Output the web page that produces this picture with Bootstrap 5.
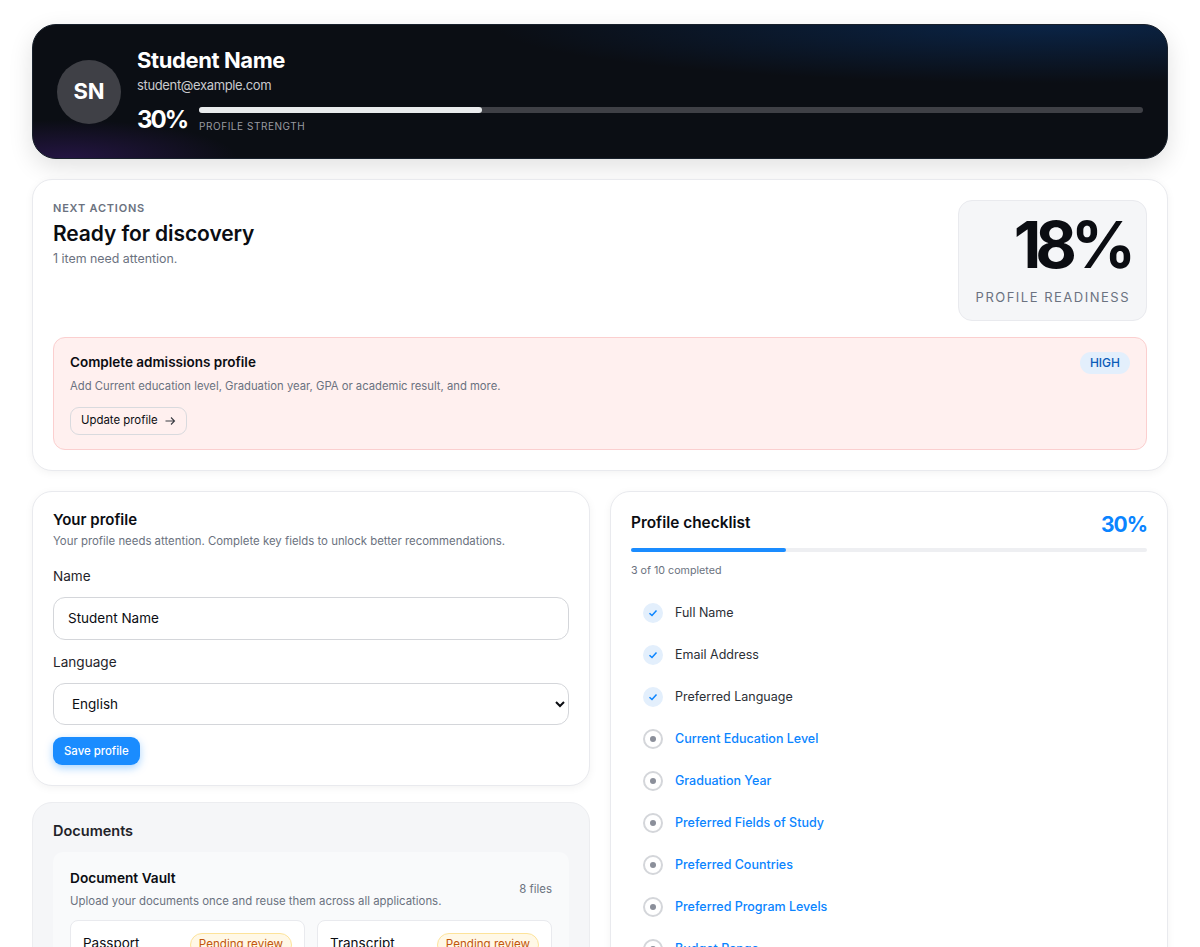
<!DOCTYPE html>
<html lang="en">
<head>
    <meta charset="UTF-8">
    <meta name="viewport" content="width=device-width, initial-scale=1.0">
    <title>Student profile</title>
    <link href="https://cdn.jsdelivr.net/npm/bootstrap@5.3.2/dist/css/bootstrap.min.css" rel="stylesheet">
    <style>
        body { background: #fff; font-family: Inter, "Liberation Sans", sans-serif; color: #0b0d12; height: 947px; overflow: hidden; }
        .page-wrap { padding: 24px 32px; }
        .hero-box { height: 135px; padding: 0 24px; border: 1px solid #18202b; border-radius: 24px; color: #fff; gap: 16px; margin-bottom: 20px;
            background: radial-gradient(ellipse 560px 58px at 90% 0, rgba(10,60,125,.48), transparent), radial-gradient(ellipse 170px 38px at 3% 100%, rgba(70,30,130,.42), transparent), #0b0e14;
            box-shadow: 0 8px 24px rgba(0,0,0,.12); }
        .hero-avatar { width: 64px; height: 64px; border-radius: 50%; background: #3f4046; font-size: 22px; font-weight: 700; }
        .hero-text { margin-bottom: 1px; }
        .hero-name { font-size: 22px; font-weight: 700; letter-spacing: -.4px; line-height: 28px; }
        .hero-mail { font-size: 13px; letter-spacing: -.35px; color: #c9cacd; line-height: 20px; margin-top: 1px; }
        .hero-strength { margin-top: 9px; gap: 12px; }
        .hero-pct { font-size: 24px; font-weight: 700; letter-spacing: -2px; line-height: 32px; }
        .hero-bar { margin-top: 3px; }
        .hero-track { height: 6px; border-radius: 3px; background: #3f4046; }
        .hero-fill { height: 6px; border-radius: 3px; background: #e9ebed; }
        .hero-label { font-size: 10px; letter-spacing: .55px; color: #9a9ba0; line-height: 14px; margin-top: 6px; }
        .panel-box { background: #fff; border: 1px solid #e9eaee; border-radius: 20px; padding: 20px; box-shadow: 0 2px 8px rgba(0,0,0,.05); }
        .eyebrow-text { font-size: 11px; font-weight: 600; letter-spacing: .8px; color: #6b7280; line-height: 16px; }
        .ready-title { font-size: 21px; font-weight: 600; letter-spacing: -.1px; line-height: 34px; margin-top: 1px; }
        .ready-note { font-size: 12.4px; color: #6b7280; line-height: 16px; }
        .muted-text { font-size: 11.4px; color: #6b7280; }
        .score-box { width: 189px; height: 121px; padding: 0 16px; background: #f5f6f8; border: 1px solid #e9eaee; border-radius: 14px; text-align: right; }
        .score-num { font-size: 64px; font-weight: 700; letter-spacing: -6px; line-height: 76px; margin-top: 6px; }
        .score-label { font-size: 13px; letter-spacing: 1.5px; color: #6b7280; line-height: 18px; margin-top: 5px; white-space: nowrap; }
        .alert-box { background: #fff0ef; border: 1px solid #fbcfcf; border-radius: 12px; padding: 13px 16px; margin-top: 16px; height: 113px; }
        .alert-title { font-size: 13.5px; font-weight: 600; line-height: 22px; }
        .alert-desc { font-size: 11.27px; margin-top: 4px; }
        .high-tag { background: #e3effc; color: #0a5bb8; font-size: 12px; font-weight: 500; border-radius: 12px; padding: 3px 10px; line-height: 16px; margin-top: 1px; }
        .update-btn { font-size: 11.4px; gap: 6px; border: 1px solid #d9dade; border-radius: 9px; padding: 0 10px; height: 28px; background: transparent; color: #0b0d12; margin-top: 12px; }
        .two-col { display: grid; grid-template-columns: 558px 558px; gap: 20px; margin-top: 20px; }
        .profile-title { font-size: 15px; font-weight: 600; line-height: 16px; margin-bottom: 5px; }
        .profile-sub { margin-bottom: 16px; }
        .field-label { font-size: 13.6px; color: #1f2329; margin-bottom: 11px; line-height: 20px; }
        .field-input.form-control, .field-input.form-select { height: 43px; border-radius: 12px; font-size: 13.5px; color: #0b0d12; border-color: #d4d6da; padding: 4px 14px 6px; margin-bottom: 12px; }
        .field-input.form-select { height: 42px; padding: 6px 8px 6px 14px; appearance: auto; -webkit-appearance: auto; background-image: none; }
        .save-btn { font-size: 11.4px; font-weight: 500; color: #fff; background: #1a8cff; border: 0; border-radius: 9px; height: 28px; padding: 0 11px; box-shadow: 0 3px 8px rgba(10,132,255,.35); display: block; }
        .docs-box { background: #f5f6f8; border: 1px solid #ecedf0; border-radius: 20px; padding: 20px; margin-top: 16px; }
        .docs-title { font-size: 14.5px; font-weight: 600; color: #1f2329; line-height: 16px; }
        .vault-box { background: #f9fafb; border-radius: 10px; padding: 17px; margin-top: 13px; }
        .vault-title { font-size: 13.7px; font-weight: 600; line-height: 18px; margin-bottom: 6px; }
        .file-grid { display: grid; grid-template-columns: 1fr 1fr; gap: 12px; margin-top: 10px; }
        .file-box { background: #fff; border: 1px solid #e9eaee; border-radius: 8px; padding: 12px; height: 100px; }
        .file-name { font-size: 13.5px; color: #0b0d12; }
        .pending-tag { background: #fff8e6; color: #c2570c; border: 1px solid #fde39a; border-radius: 12px; font-size: 11.6px; padding: 2px 8px; white-space: nowrap; }
        .check-title { font-size: 15.4px; font-weight: 600; line-height: 20px; margin-bottom: 4px; }
        .check-pct { font-size: 21px; font-weight: 700; letter-spacing: -1px; color: #0a84ff; line-height: 26px; }
        .check-track { height: 4px; border-radius: 2px; background: #eeeff2; margin-top: 10px; }
        .check-fill { height: 4px; border-radius: 2px; background: #1a8cff; }
        .check-count { font-size: 10.7px; color: #6b7280; margin-top: 11px; margin-bottom: 13px; }
        .check-row { height: 42px; padding-left: 12px; gap: 12px; font-size: 12.5px; color: #2b2f36; }
        .check-row a { color: #0a84ff; text-decoration: none; font-weight: 500; }
        .check-done { width: 20px; height: 20px; border-radius: 50%; background: #e3effc; }
        .check-open { width: 20px; height: 20px; border-radius: 50%; border: 2px solid #d4d6da; }
        .check-dot { width: 6px; height: 6px; border-radius: 50%; background: #8b8f9a; }
    </style>
</head>
<body>
<div class="page-wrap">
    <div class="hero-box d-flex align-items-center">
        <div class="hero-avatar d-flex align-items-center justify-content-center flex-shrink-0">SN</div>
        <div class="hero-text flex-grow-1">
            <div class="hero-name">Student Name</div>
            <div class="hero-mail">student@example.com</div>
            <div class="hero-strength d-flex align-items-start">
                <div class="hero-pct">30%</div>
                <div class="hero-bar flex-grow-1">
                    <div class="hero-track"><div class="hero-fill" style="width: 30%"></div></div>
                    <div class="hero-label">PROFILE STRENGTH</div>
                </div>
            </div>
        </div>
    </div>

    <div class="panel-box">
        <div class="d-flex justify-content-between align-items-start">
            <div>
                <div class="eyebrow-text">NEXT ACTIONS</div>
                <div class="ready-title">Ready for discovery</div>
                <div class="ready-note">1 item need attention.</div>
            </div>
            <div class="score-box">
                <div class="score-num">18%</div>
                <div class="score-label">PROFILE READINESS</div>
            </div>
        </div>
        <div class="alert-box">
            <div class="d-flex justify-content-between align-items-start">
                <div class="alert-title">Complete admissions profile</div>
                <span class="high-tag">HIGH</span>
            </div>
            <div class="muted-text alert-desc">Add Current education level, Graduation year, GPA or academic result, and more.</div>
            <button class="update-btn d-inline-flex align-items-center">Update profile
                <svg width="12" height="12" viewBox="0 0 12 12" fill="none" stroke="#3a3d44" stroke-width="1.1"><path d="M1.5 6h9M7 2.5 10.5 6 7 9.5"/></svg>
            </button>
        </div>
    </div>

    <div class="two-col">
        <div>
            <div class="panel-box">
                <div class="profile-title">Your profile</div>
                <div class="muted-text profile-sub">Your profile needs attention. Complete key fields to unlock better recommendations.</div>
                <div class="field-label">Name</div>
                <input class="form-control field-input" value="Student Name">
                <div class="field-label">Language</div>
                <select class="form-select field-input"><option>English</option></select>
                <button class="save-btn">Save profile</button>
            </div>
            <div class="docs-box">
                <div class="docs-title">Documents</div>
                <div class="vault-box">
                    <div class="d-flex justify-content-between align-items-center">
                        <div>
                            <div class="vault-title">Document Vault</div>
                            <div class="muted-text">Upload your documents once and reuse them across all applications.</div>
                        </div>
                        <div class="muted-text">8 files</div>
                    </div>
                    <div class="file-grid">
                        <div class="file-box d-flex justify-content-between align-items-start"><span class="file-name">Passport</span><span class="pending-tag">Pending review</span></div>
                        <div class="file-box d-flex justify-content-between align-items-start"><span class="file-name">Transcript</span><span class="pending-tag">Pending review</span></div>
                    </div>
                </div>
            </div>
        </div>
        <div class="panel-box align-self-start">
            <div class="d-flex justify-content-between align-items-center">
                <div class="check-title">Profile checklist</div>
                <div class="check-pct">30%</div>
            </div>
            <div class="check-track"><div class="check-fill" style="width: 30%"></div></div>
            <div class="check-count">3 of 10 completed</div>
            <div id="checkList"></div>
        </div>
    </div>
</div>
<script>
var doneItems = ['Full Name', 'Email Address', 'Preferred Language'];
var openItems = ['Current Education Level', 'Graduation Year', 'Preferred Fields of Study', 'Preferred Countries', 'Preferred Program Levels', 'Budget Range'];
var html = '';
doneItems.forEach(function(t) {
    html += '<div class="check-row d-flex align-items-center"><span class="check-done d-flex align-items-center justify-content-center"><svg width="10" height="10" viewBox="0 0 10 10" fill="none" stroke="#0a84ff" stroke-width="1.5"><path d="M1.5 5.2 4 7.5 8.5 2.5"/></svg></span><span>' + t + '</span></div>';
});
openItems.forEach(function(t) {
    html += '<div class="check-row d-flex align-items-center"><span class="check-open d-flex align-items-center justify-content-center"><span class="check-dot"></span></span><a href="#">' + t + '</a></div>';
});
document.getElementById('checkList').innerHTML = html;
</script>
<script src="https://cdn.jsdelivr.net/npm/bootstrap@5.3.2/dist/js/bootstrap.bundle.min.js"></script>
</body>
</html>
